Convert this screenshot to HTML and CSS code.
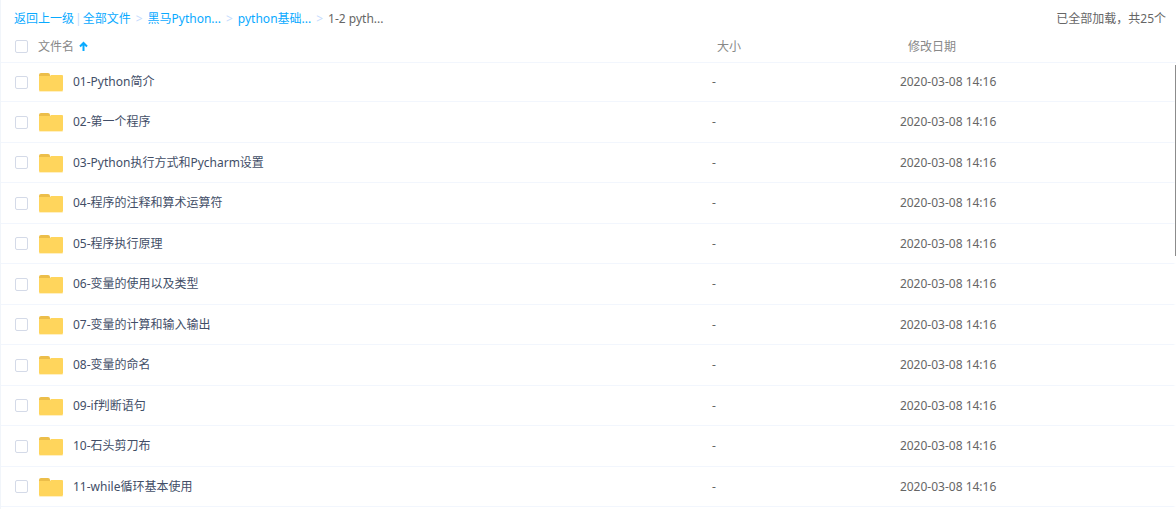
FILE: index.html
```html
<!DOCTYPE html>
<html lang="zh-CN">
<head>
  <meta charset="UTF-8">
  <title>全部文件</title>
  <link rel="stylesheet" href="styles.css">
</head>
<body>
  <svg class="sprite" aria-hidden="true">
    <symbol id="folder" viewBox="0 -1 24 20">
      <path d="M0 2Q0 0 2 0H9Q11 0 11 2V6H0Z" fill="#ecbe4a"/>
      <path d="M0 3H11L12 2H23Q24 2 24 3V17Q24 18 23 18H1Q0 18 0 17Z" fill="#ffd55c"/>
      <path d="M0 18H24Q24 19 23 19H1Q0 19 0 18Z" fill="#fff0c4"/>
    </symbol>
  </svg>

  <main class="panel">
    <!-- Fil d'Ariane -->
    <header class="topbar">
      <nav class="crumbs">
        <a href="#">返回上一级</a><span class="bar">|</span><a href="#">全部文件</a><span class="sep">&gt;</span><a href="#">黑马Python...</a><span class="sep">&gt;</span><a href="#">python基础...</a><span class="sep">&gt;</span><span class="current">1-2 pyth...</span>
      </nav>
      <span class="count">已全部加载，共25个</span>
    </header>

    <!-- Liste des fichiers -->
    <table class="files">
      <thead>
        <tr>
          <th class="name"><label class="cell"><input type="checkbox" aria-label="全选"><span>文件名</span><svg class="arrow" viewBox="0 0 9 12"><path d="M4.5 10V2M1 5.5L4.5 2L8 5.5" fill="none" stroke="#09aaff" stroke-width="2"/></svg></label></th>
          <th class="size">大小</th>
          <th class="date">修改日期</th>
        </tr>
      </thead>
      <tbody>
        <tr><td><label class="cell"><input type="checkbox"><svg class="folder"><use href="#folder"/></svg><span>01-Python简介</span></label></td><td>-</td><td>2020-03-08 14:16</td></tr>
        <tr><td><label class="cell"><input type="checkbox"><svg class="folder"><use href="#folder"/></svg><span>02-第一个程序</span></label></td><td>-</td><td>2020-03-08 14:16</td></tr>
        <tr><td><label class="cell"><input type="checkbox"><svg class="folder"><use href="#folder"/></svg><span>03-Python执行方式和Pycharm设置</span></label></td><td>-</td><td>2020-03-08 14:16</td></tr>
        <tr><td><label class="cell"><input type="checkbox"><svg class="folder"><use href="#folder"/></svg><span>04-程序的注释和算术运算符</span></label></td><td>-</td><td>2020-03-08 14:16</td></tr>
        <tr><td><label class="cell"><input type="checkbox"><svg class="folder"><use href="#folder"/></svg><span>05-程序执行原理</span></label></td><td>-</td><td>2020-03-08 14:16</td></tr>
        <tr><td><label class="cell"><input type="checkbox"><svg class="folder"><use href="#folder"/></svg><span>06-变量的使用以及类型</span></label></td><td>-</td><td>2020-03-08 14:16</td></tr>
        <tr><td><label class="cell"><input type="checkbox"><svg class="folder"><use href="#folder"/></svg><span>07-变量的计算和输入输出</span></label></td><td>-</td><td>2020-03-08 14:16</td></tr>
        <tr><td><label class="cell"><input type="checkbox"><svg class="folder"><use href="#folder"/></svg><span>08-变量的命名</span></label></td><td>-</td><td>2020-03-08 14:16</td></tr>
        <tr><td><label class="cell"><input type="checkbox"><svg class="folder"><use href="#folder"/></svg><span>09-if判断语句</span></label></td><td>-</td><td>2020-03-08 14:16</td></tr>
        <tr><td><label class="cell"><input type="checkbox"><svg class="folder"><use href="#folder"/></svg><span>10-石头剪刀布</span></label></td><td>-</td><td>2020-03-08 14:16</td></tr>
        <tr><td><label class="cell"><input type="checkbox"><svg class="folder"><use href="#folder"/></svg><span>11-while循环基本使用</span></label></td><td>-</td><td>2020-03-08 14:16</td></tr>
      </tbody>
    </table>
    <div class="scrollbar"></div>
  </main>
</body>
</html>
```
FILE: styles.css
```css
* {
  box-sizing: border-box;
}
body {
  margin: 0;
  background: #fff;
  color: #666;
  font: 12px/18px "Noto Sans", "Noto Sans CJK SC", sans-serif;
}
.sprite {
  display: none;
}
.panel {
  position: relative;
  min-height: 100vh;
  border-left: 1px solid #f1f5fa;
}

/* Barre du haut */
.topbar {
  display: flex;
  justify-content: space-between;
  padding: 10px 10px 3px 13px;
}
.crumbs {
  display: flex;
}
a {
  color: #09aaff;
  text-decoration: none;
}
a:hover {
  text-decoration: underline;
}
.bar {
  margin: 0 1px;
  color: #c4dbfe;
}
.sep {
  margin: 0 5px;
  color: #c4dbfe;
}

/* Tableau */
.files {
  width: 100%;
  table-layout: fixed;
  border-spacing: 0;
}
th, td {
  height: 40px;
  padding: 0;
  text-align: left;
  border-bottom: 1px solid #f2f6fd;
}
th {
  height: 32px;
  color: #888;
  font-weight: normal;
}
tbody tr:nth-child(even) td {
  height: 41px;
}
tbody tr:first-child td {
  height: 39px;
}
/* Place de la barre de défilement */
td:last-child {
  border-right: 3px solid #fff;
}
th.size {
  width: 16%;
  padding-left: 5px;
}
th.date {
  width: 23.5%;
  padding-left: 8px;
}
.cell {
  display: flex;
  align-items: center;
  padding-left: 14px;
}
td .cell {
  color: #424e67;
}
input {
  appearance: none;
  width: 13px;
  height: 13px;
  margin: 0 10px 0 0;
  border: 1px solid #d4dae8;
  border-radius: 2px;
  background: #fff;
}
input:checked {
  background: #09aaff;
}
td input {
  margin-right: 11px;
}
.folder {
  width: 24px;
  height: 20px;
  margin-right: 10px;
}
.arrow {
  width: 9px;
  height: 12px;
  margin-left: 5px;
}
.scrollbar {
  position: absolute;
  top: 65px;
  right: 0;
  width: 1px;
  height: 191px;
  background: #8c8c8c;
}
```
